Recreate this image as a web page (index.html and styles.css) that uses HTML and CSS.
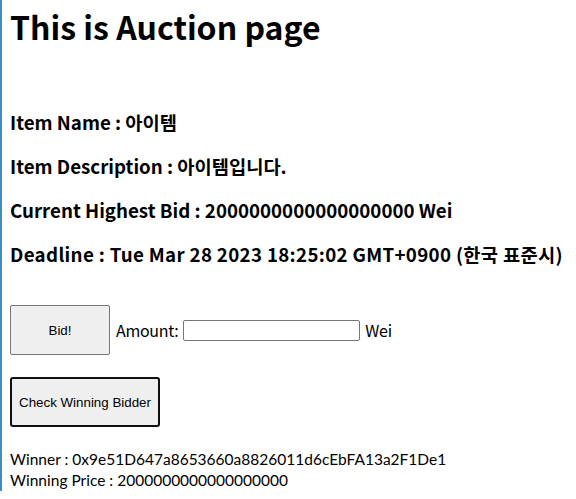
FILE: index.html
```html
<!DOCTYPE html>
<html>
<head>
<meta charset="utf-8">
<link rel="stylesheet" href="styles.css">
</head>
<body>
<h1 class="title">This is Auction page</h1>
<div class="info">
  <h3 class="line">Item Name : 아이템</h3>
  <h3 class="line">Item Description : 아이템입니다.</h3>
  <h3 class="line">Current Highest Bid : 2000000000000000000 Wei</h3>
  <h3 class="line wide">Deadline : Tue Mar 28 2023 18:25:02 GMT+0900 (한국 표준시)</h3>
</div>
<div class="bid-row">
  <button class="btn bid">Bid!</button>
  <span class="label">Amount:</span>
  <input class="amount" type="text">
  <span class="label">Wei</span>
</div>
<button class="btn check">Check Winning Bidder</button>
<div class="result">
  <div class="result-line">Winner : 0x9e51D647a8653660a8826011d6cEbFA13a2F1De1</div>
  <div class="result-line">Winning Price : 2000000000000000000</div>
</div>
</body>
</html>
```
FILE: styles.css
```css
html {
  border-left: 2px solid #3a8fc4;
  background: #fff;
}
body {
  margin: 0 8px 0 8px;
  padding-top: 6px;
  font-family: "Noto Sans CJK KR", "Noto Sans", sans-serif;
  color: #000;
}
.title {
  margin: 0;
  font-size: 32px;
  line-height: 40px;
  font-weight: 700;
}
.info {
  display: flex;
  flex-direction: column;
  gap: 20px;
  margin-top: 64px;
}
.line {
  margin: 0;
  font-size: 18.72px;
  line-height: 24px;
  font-weight: 700;
}
.wide {
  letter-spacing: 0.33px;
}
.bid-row {
  display: flex;
  align-items: center;
  gap: 5px;
  margin-top: 39px;
  font-size: 16px;
}
.label {
  letter-spacing: -0.3px;
}
.btn {
  font-family: "Liberation Sans", Arial, sans-serif;
  font-size: 13.33px;
  color: #000;
  background: #efefef;
  border: 1px solid #767676;
  border-radius: 2px;
  height: 50px;
  padding: 0;
}
.bid {
  width: 100px;
  margin-right: 1px;
}
.amount {
  box-sizing: border-box;
  width: 177px;
  height: 21px;
  border: 1px solid #767676;
  border-radius: 2px;
  padding: 0 2px;
}
.check {
  display: block;
  width: 150px;
  margin-top: 22px;
  border: 2px solid #101010;
  border-radius: 3px;
}
.result {
  margin-top: 22px;
}
.result-line {
  font-family: "Lato", "Noto Sans CJK KR", sans-serif;
  font-size: 15.5px;
  line-height: 21px;
}
```
